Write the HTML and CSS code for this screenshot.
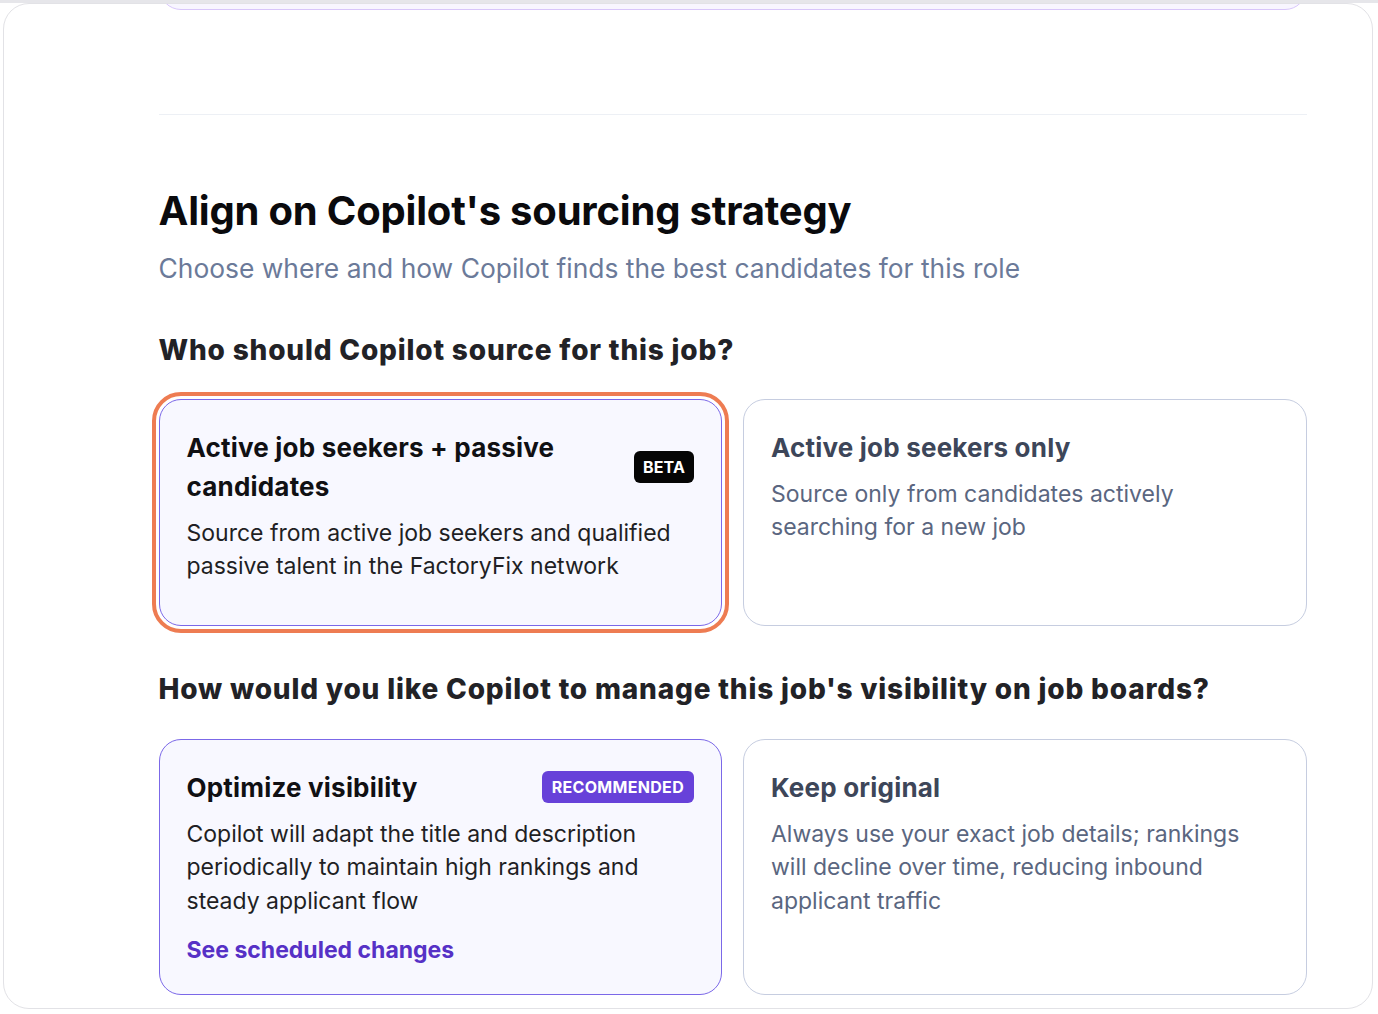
FILE: index.html
```html
<!DOCTYPE html>
<html lang="en">
<head>
<meta charset="utf-8">
<title>Sourcing strategy</title>
<link rel="stylesheet" href="styles.css">
</head>
<body>
<div class="topbar"></div>
<div class="frame">
  <div class="content">
    <div class="prev-card"></div>
    <hr class="divider">
    <h1 class="title">Align on Copilot's sourcing strategy</h1>
    <p class="subtitle">Choose where and how Copilot finds the best candidates for this role</p>

    <h2 class="question q1">Who should Copilot source for this job?</h2>
    <div class="options row1">
      <div class="card card-selected card-focus">
        <div class="card-head">
          <h3 class="card-title">Active job seekers + passive candidates</h3>
          <span class="badge badge-beta">BETA</span>
        </div>
        <p class="card-desc">Source from active job seekers and qualified passive talent in the FactoryFix network</p>
      </div>
      <div class="card">
        <div class="card-head">
          <h3 class="card-title">Active job seekers only</h3>
        </div>
        <p class="card-desc">Source only from candidates actively searching for a new job</p>
      </div>
    </div>

    <h2 class="question q2">How would you like Copilot to manage this job's visibility on job boards?</h2>
    <div class="options row2">
      <div class="card card-selected">
        <div class="card-head">
          <h3 class="card-title">Optimize visibility</h3>
          <span class="badge badge-rec">RECOMMENDED</span>
        </div>
        <p class="card-desc">Copilot will adapt the title and description periodically to maintain high rankings and steady applicant flow</p>
        <a class="card-link" href="#">See scheduled changes</a>
      </div>
      <div class="card">
        <div class="card-head">
          <h3 class="card-title">Keep original</h3>
        </div>
        <p class="card-desc">Always use your exact job details; rankings will decline over time, reducing inbound applicant traffic</p>
      </div>
    </div>
  </div>
</div>
</body>
</html>
```

FILE: styles.css
```css
* { box-sizing: border-box; }

html, body {
  margin: 0;
  padding: 0;
  background: #ffffff;
  font-family: Inter, "Noto Sans", "Liberation Sans", sans-serif;
  color: #111114;
}

.topbar {
  height: 3px;
  background: #e6e6ea;
}

.frame {
  margin: 0 5px 0 3px;
  height: 1006px;
  border: 1.5px solid #e2e2e6;
  border-radius: 26px;
  overflow: hidden;
}

.content {
  margin-left: 154.5px;
  width: 1148px;
}

.prev-card {
  margin-top: -200px;
  height: 206px;
  border: 1.5px solid #d8c6fa;
  border-radius: 22px;
  background: #f8f6ff;
}

.divider {
  margin: 103.5px 0 0 0;
  border: none;
  height: 1px;
  background: #edf0f5;
}

.title {
  margin: 72px 0 0 0;
  font-size: 40px;
  line-height: 48px;
  font-weight: 700;
  letter-spacing: -0.2px;
  color: #0a0a0d;
}

.subtitle {
  margin: 15px 0 0 0;
  font-size: 26.4px;
  line-height: 36px;
  font-weight: 400;
  color: #6b7a99;
}

.question {
  margin: 0;
  font-size: 28px;
  line-height: 36px;
  font-weight: 800;
  letter-spacing: 0.82px;
  color: #222226;
}

.q1 { margin-top: 46px; }
.q2 { margin-top: 45px; }

.options {
  display: grid;
  grid-template-columns: 1fr 1fr;
  column-gap: 21px;
}

.row1 { margin-top: 31px; }
.row1 .card { min-height: 227px; }
.row2 { margin-top: 32px; }
.row2 .card { min-height: 256px; }

.card {
  border: 1px solid #c6cde0;
  border-radius: 22px;
  background: #ffffff;
  padding: 28px 27px 28px 27px;
}

.card-selected {
  border-color: #7b68e8;
  background: #f8f8ff;
}

.card-focus {
  outline: 4px solid #ee7c52;
  outline-offset: 3px;
}

.card-head {
  display: flex;
  align-items: center;
  justify-content: space-between;
  gap: 24px;
}

.card-title {
  margin: 0;
  font-size: 26px;
  line-height: 39px;
  font-weight: 700;
  letter-spacing: 0.2px;
  color: #3d4659;
}

.card-selected .card-title { color: #101013; }
.card-focus .card-title { max-width: 420px; }

.card-desc {
  margin: 11px 0 0 0;
  font-size: 23px;
  line-height: 33.5px;
  font-weight: 400;
  color: #5a6680;
}

.card-selected .card-desc { color: #1f1f24; }

.badge {
  flex: none;
  display: inline-block;
  height: 32px;
  line-height: 32px;
  padding: 0 9px;
  border-radius: 6px;
  font-size: 16px;
  font-weight: 700;
  color: #ffffff;
  letter-spacing: 0.1px;
}

.badge-beta { background: #050505; }
.badge-rec { background: #6741d9; padding: 0 10px; letter-spacing: 0.3px; }

.card-link {
  display: block;
  margin-top: 16px;
  font-size: 23px;
  line-height: 32px;
  font-weight: 700;
  color: #5631c6;
  text-decoration: none;
}
```
